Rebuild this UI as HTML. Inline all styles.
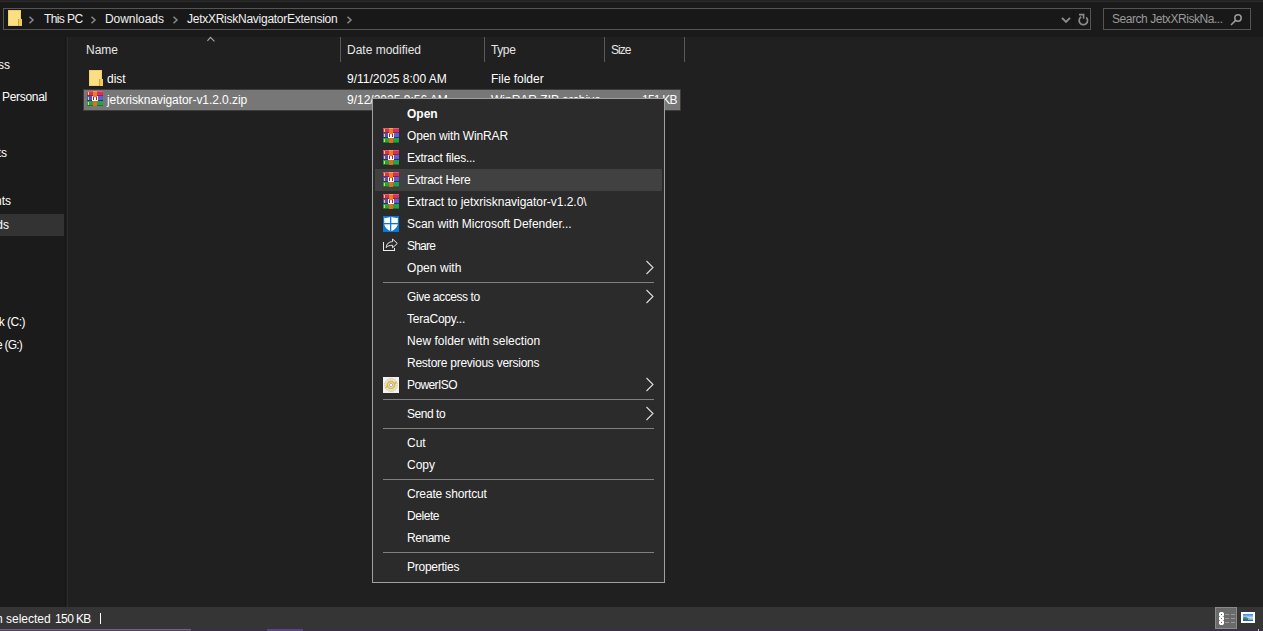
<!DOCTYPE html>
<html><head><meta charset="utf-8">
<style>
*{margin:0;padding:0;box-sizing:border-box}
html,body{width:1263px;height:631px;overflow:hidden;background:#202020;font-family:"Liberation Sans",sans-serif;font-size:12px;color:#fff}
.a{position:absolute}
.t{position:absolute;white-space:pre;line-height:14px;font-size:12px}
.hsep{position:absolute;width:1px;background:#5a5a5a;top:37px;height:25px}
.mi{position:absolute;left:407px;white-space:pre;line-height:14px}
.chev{position:absolute;left:645px}
.msep{position:absolute;left:383px;width:271px;height:1px;background:#808080}
</style></head><body>
<!-- top window strip -->
<div class="a" style="left:0;top:0;width:1263px;height:1px;background:#232323"></div>
<div class="a" style="left:0;top:1px;width:1263px;height:1px;background:#2b2b2b"></div>
<div class="a" style="left:0;top:2px;width:1263px;height:35px;background:#1a1a1a"></div>

<!-- address box -->
<div class="a" style="left:3px;top:8px;width:1088px;height:22px;border:1px solid #555;background:#181818"></div>
<div class="a" style="left:1073px;top:9px;width:1px;height:20px;background:#131313"></div>
<svg class="a" style="left:8px;top:10px" width="14" height="16" viewBox="0 0 14 16" shape-rendering="crispEdges">
  <rect x="0" y="0" width="13" height="16" fill="#f3cf66"/>
  <rect x="1" y="1" width="11" height="14" fill="#fbdf87"/>
  <rect x="10" y="9" width="4" height="7" fill="#f2c95a"/>
  <rect x="10" y="9" width="1" height="7" fill="#cfa43a"/>
</svg>
<svg class="a" style="left:28px;top:16px" width="7" height="8" viewBox="0 0 7 8"><path d="M1.5 0.8 L5 4 L1.5 7.2" fill="none" stroke="#8a8a8a" stroke-width="1.5"/></svg>
<div class="t" style="left:44px;top:12px;color:#f0f0f0;letter-spacing:-0.6px">This</div><div class="t" style="left:67px;top:12px;color:#f0f0f0;letter-spacing:-0.5px">PC</div>
<svg class="a" style="left:90px;top:16px" width="7" height="8" viewBox="0 0 7 8"><path d="M1.5 0.8 L5 4 L1.5 7.2" fill="none" stroke="#8a8a8a" stroke-width="1.5"/></svg>
<div class="t" style="left:105px;top:12px;color:#f0f0f0;letter-spacing:-0.05px">Downloads</div>
<svg class="a" style="left:172px;top:16px" width="7" height="8" viewBox="0 0 7 8"><path d="M1.5 0.8 L5 4 L1.5 7.2" fill="none" stroke="#8a8a8a" stroke-width="1.5"/></svg>
<div class="t" style="left:187px;top:12px;color:#f0f0f0;letter-spacing:-0.26px">JetxXRiskNavigatorExtension</div>
<svg class="a" style="left:346px;top:16px" width="7" height="8" viewBox="0 0 7 8"><path d="M1.5 0.8 L5 4 L1.5 7.2" fill="none" stroke="#8a8a8a" stroke-width="1.5"/></svg>
<svg class="a" style="left:1060px;top:16px" width="12" height="8" viewBox="1060 16 12 8"><path d="M1062 17.8 L1066 21.8 L1070 17.8" fill="none" stroke="#8c8c8c" stroke-width="1.9"/></svg>
<svg class="a" style="left:1076px;top:12px" width="14" height="15" viewBox="1076 12 14 15"><path d="M1086.2 17.3 A4.2 4.2 0 1 1 1081.2 16.8" fill="none" stroke="#8c8c8c" stroke-width="1.7"/><path d="M1079 14.6 H1083.6 V18.8" fill="none" stroke="#8c8c8c" stroke-width="1.6"/></svg>
<!-- search box -->
<div class="a" style="left:1103px;top:8px;width:148px;height:22px;border:1px solid #555;background:#181818"></div>
<div class="t" style="left:1112px;top:12px;color:#9a9a9a;letter-spacing:-0.45px">Search JetxXRiskNa...</div>
<svg class="a" style="left:1228px;top:12px" width="16" height="16" viewBox="1228 12 16 16"><circle cx="1238" cy="18" r="3.2" fill="none" stroke="#999" stroke-width="1.5"/><path d="M1235.6 20.4 L1231 25" stroke="#999" stroke-width="1.6"/></svg>

<!-- nav pane -->
<div class="a" style="left:0;top:37px;width:65px;height:570px;background:#1b1b1b"></div>
<div class="a" style="left:65px;top:37px;width:1px;height:570px;background:#161616"></div>
<div class="a" style="left:66px;top:37px;width:1px;height:570px;background:#1f1f1f"></div>
<div class="a" style="left:67px;top:37px;width:1px;height:570px;background:#2b2b2b"></div>
<div class="a" style="left:0;top:214px;width:64px;height:22px;background:#333"></div>
<div class="t" style="right:1253px;top:58px">Quick access</div>
<div class="t" style="left:2px;top:90px;letter-spacing:-0.3px">Personal</div>
<div class="t" style="right:1256px;top:146px">Documents</div>
<div class="t" style="right:1252px;top:194px">Documents</div>
<div class="t" style="right:1254px;top:218px">Downloads</div>
<div class="t" style="right:1238px;top:315px;letter-spacing:-0.5px">Local Disk (C:)</div>
<div class="t" style="right:1241px;top:338px;letter-spacing:-0.8px">Google Drive (G:)</div>

<!-- column header -->
<div class="t" style="left:86px;top:43px;color:#e6e6e6">Name</div>
<svg class="a" style="left:206px;top:36px" width="10" height="7" viewBox="0 0 10 7"><path d="M1.4 4.9 L4.5 1.4 L8.4 5.4" fill="none" stroke="#a8a8a8" stroke-width="1.1"/></svg>
<div class="hsep" style="left:340px"></div>
<div class="t" style="left:347px;top:43px;color:#e6e6e6">Date modified</div>
<div class="hsep" style="left:484px"></div>
<div class="t" style="left:491px;top:43px;color:#e6e6e6;letter-spacing:-0.4px">Type</div>
<div class="hsep" style="left:604px"></div>
<div class="t" style="left:611px;top:43px;color:#e6e6e6;letter-spacing:-1px">Size</div>
<div class="hsep" style="left:684px"></div>

<!-- row 1 -->
<svg class="a" style="left:89px;top:70px" width="14" height="16" viewBox="0 0 14 16" shape-rendering="crispEdges">
  <rect x="0" y="0" width="13" height="16" fill="#f3cf66"/>
  <rect x="1" y="1" width="11" height="14" fill="#fbdf87"/>
  <rect x="10" y="9" width="4" height="7" fill="#f2c95a"/>
  <rect x="10" y="9" width="1" height="7" fill="#cfa43a"/>
</svg>
<div class="t" style="left:107px;top:72px">dist</div>
<div class="t" style="left:347px;top:72px">9/11/2025 8:00 AM</div>
<div class="t" style="left:491px;top:72px">File folder</div>

<!-- row 2 selected -->
<div class="a" style="left:83px;top:89px;width:598px;height:22px;background:#777;border:1px solid #3d3d3d"></div>
<svg class="a" style="left:87px;top:91px" width="16" height="15" viewBox="0 0 16 15" shape-rendering="crispEdges">
  <rect x="0" y="0" width="16" height="5" fill="#d3305e"/>
  <rect x="0" y="0" width="16" height="1" fill="#e6587f"/>
  <rect x="0" y="4" width="16" height="1" fill="#9a1f45"/>
  <rect x="0" y="5" width="16" height="5" fill="#4a52c8"/>
  <rect x="11" y="5" width="5" height="4" fill="#5860d4"/>
  <rect x="0" y="9" width="16" height="1" fill="#2b2d8c"/>
  <rect x="0" y="10" width="16" height="5" fill="#22a444"/>
  <rect x="0" y="14" width="16" height="1" fill="#157a2e"/>
  <rect x="6" y="0" width="4" height="15" fill="#f07a22"/>
  <rect x="6" y="0" width="4" height="1" fill="#f6a050"/>
  <rect x="6" y="10" width="4" height="5" fill="#e8681e"/>
  <rect x="5" y="5" width="6" height="5" fill="#fbfbfb"/>
  <rect x="6" y="5" width="4" height="1" fill="#f07a22"/>
  <rect x="6" y="6" width="1" height="3" fill="#d41010"/>
  <rect x="9" y="6" width="1" height="3" fill="#d41010"/>
  <rect x="7" y="6" width="2" height="1" fill="#d8ecff"/>
  <rect x="1" y="1" width="1" height="3" fill="#f8d820"/>
  <rect x="1" y="6" width="1" height="3" fill="#f8d820"/>
  <rect x="1" y="11" width="1" height="3" fill="#f8d820"/>
</svg>
<div class="t" style="left:107px;top:93px;letter-spacing:-0.07px">jetxrisknavigator-v1.2.0.zip</div>
<div class="t" style="left:347px;top:93px">9/12/2025 9:56 AM</div>
<div class="t" style="left:491px;top:93px">WinRAR ZIP archive</div>
<div class="t" style="left:642px;top:93px;letter-spacing:-0.75px">151 KB</div>

<!-- status bar -->
<div class="a" style="left:0;top:607px;width:1263px;height:22px;background:#353535"></div>
<div class="t" style="left:-20px;top:612px">item selected</div>
<div class="t" style="left:55px;top:612px;letter-spacing:-0.6px">150</div><div class="t" style="left:76px;top:612px;letter-spacing:-0.8px">KB</div>
<div class="a" style="left:100px;top:613px;width:1px;height:11px;background:#fff"></div>
<!-- view buttons -->
<div class="a" style="left:1215px;top:607px;width:22px;height:22px;background:#6a6a6a;border:1px solid #8a8a8a"></div>
<div class="a" style="left:1219px;top:612px;width:5px;height:13px;background:#fff"></div>
<div class="a" style="left:1219px;top:612px;width:1px;height:1px;background:#9a9a9a"></div><div class="a" style="left:1219px;top:616px;width:1px;height:1px;background:#9a9a9a"></div><div class="a" style="left:1219px;top:620px;width:1px;height:1px;background:#9a9a9a"></div><div class="a" style="left:1219px;top:624px;width:1px;height:1px;background:#9a9a9a"></div><div class="a" style="left:1223px;top:612px;width:1px;height:1px;background:#9a9a9a"></div><div class="a" style="left:1223px;top:616px;width:1px;height:1px;background:#9a9a9a"></div><div class="a" style="left:1223px;top:620px;width:1px;height:1px;background:#9a9a9a"></div><div class="a" style="left:1223px;top:624px;width:1px;height:1px;background:#9a9a9a"></div>
<div class="a" style="left:1221px;top:614px;width:1px;height:1px;background:#3a7a4a"></div>
<div class="a" style="left:1221px;top:618px;width:1px;height:1px;background:#4a8af0"></div>
<div class="a" style="left:1221px;top:622px;width:1px;height:1px;background:#d02020"></div>
<div class="a" style="left:1225px;top:614px;width:4px;height:1px;background:#999"></div>
<div class="a" style="left:1231px;top:614px;width:4px;height:1px;background:#999"></div>
<div class="a" style="left:1225px;top:618px;width:4px;height:1px;background:#999"></div>
<div class="a" style="left:1231px;top:618px;width:4px;height:1px;background:#999"></div>
<div class="a" style="left:1225px;top:622px;width:4px;height:1px;background:#999"></div>
<div class="a" style="left:1231px;top:622px;width:4px;height:1px;background:#999"></div>
<div class="a" style="left:1241px;top:612px;width:14px;height:11px;background:#fff"></div>
<svg class="a" style="left:1243px;top:614px" width="10" height="7" viewBox="0 0 10 7">
  <defs><linearGradient id="sky" x1="0" y1="0" x2="0" y2="1"><stop offset="0" stop-color="#2f86ee"/><stop offset="0.6" stop-color="#d8e8f4"/></linearGradient></defs>
  <rect width="10" height="7" fill="url(#sky)"/>
  <path d="M0 3.2 Q3 2.4 5 4 Q7.5 5 10 4.6 V7 H0 Z" fill="#4a8a5a"/>
  <path d="M0 5.2 H10 V7 H0 Z" fill="#2f64a8"/>
  <rect x="5" y="4.6" width="5" height="1" fill="#c8dcea"/>
</svg>

<!-- taskbar strip -->
<div class="a" style="left:0;top:629px;width:1263px;height:2px;background:#3a2f4a"></div>
<div class="a" style="left:0;top:629px;width:191px;height:1px;background:#6f6580"></div>
<div class="a" style="left:0;top:630px;width:191px;height:1px;background:#4f4265"></div>
<div class="a" style="left:267px;top:629px;width:36px;height:2px;background:#5a4582"></div>

<div class="a" style="left:1258px;top:629px;width:1px;height:2px;background:#c8c8c8"></div>

<!-- context menu -->
<div class="a" style="left:372px;top:98px;width:293px;height:485px;background:#2b2b2b;border:1px solid #a0a0a0"></div>
<div class="a" style="left:375px;top:169px;width:287px;height:22px;background:#414141"></div>

<div class="mi" style="top:107px;font-weight:bold">Open</div>
<div class="mi" style="top:129px;letter-spacing:-0.153px">Open with WinRAR</div>
<div class="mi" style="top:151px;letter-spacing:-0.240px">Extract files...</div>
<div class="mi" style="top:173px;letter-spacing:-0.282px">Extract Here</div>
<div class="mi" style="top:195px;letter-spacing:-0.031px">Extract to jetxrisknavigator-v1.2.0\</div>
<div class="mi" style="top:217px;letter-spacing:-0.050px">Scan with Microsoft Defender...</div>
<div class="mi" style="top:239px;letter-spacing:-0.800px">Share</div>
<div class="mi" style="top:261px;letter-spacing:0.050px">Open with</div>
<div class="msep" style="top:282px"></div>
<div class="mi" style="top:290px;letter-spacing:-0.431px">Give access to</div>
<div class="mi" style="top:312px;letter-spacing:-0.220px">TeraCopy...</div>
<div class="mi" style="top:334px;letter-spacing:0.021px">New folder with selection</div>
<div class="mi" style="top:356px;letter-spacing:-0.258px">Restore previous versions</div>
<div class="mi" style="top:378px;letter-spacing:-0.600px">PowerISO</div>
<div class="msep" style="top:399px"></div>
<div class="mi" style="top:407px;letter-spacing:-0.450px">Send to</div>
<div class="msep" style="top:428px"></div>
<div class="mi" style="top:436px">Cut</div>
<div class="mi" style="top:458px">Copy</div>
<div class="msep" style="top:479px"></div>
<div class="mi" style="top:487px;letter-spacing:-0.150px">Create shortcut</div>
<div class="mi" style="top:509px;letter-spacing:-0.440px">Delete</div>
<div class="mi" style="top:531px;letter-spacing:-0.460px">Rename</div>
<div class="msep" style="top:552px"></div>
<div class="mi" style="top:560px;letter-spacing:-0.256px">Properties</div>

<!-- chevrons -->
<svg class="chev a" style="top:260px" width="10" height="15" viewBox="0 0 10 15"><path d="M1.5 1 L8 7.5 L1.5 14" fill="none" stroke="#ddd" stroke-width="1.1"/></svg>
<svg class="chev a" style="top:289px" width="10" height="15" viewBox="0 0 10 15"><path d="M1.5 1 L8 7.5 L1.5 14" fill="none" stroke="#ddd" stroke-width="1.1"/></svg>
<svg class="chev a" style="top:377px" width="10" height="15" viewBox="0 0 10 15"><path d="M1.5 1 L8 7.5 L1.5 14" fill="none" stroke="#ddd" stroke-width="1.1"/></svg>
<svg class="chev a" style="top:406px" width="10" height="15" viewBox="0 0 10 15"><path d="M1.5 1 L8 7.5 L1.5 14" fill="none" stroke="#ddd" stroke-width="1.1"/></svg>

<!-- menu icons -->
<svg class="a" style="left:383px;top:128px" width="16" height="15" viewBox="0 0 16 15" shape-rendering="crispEdges">
  <rect x="0" y="0" width="16" height="5" fill="#d3305e"/>
  <rect x="0" y="0" width="16" height="1" fill="#e6587f"/>
  <rect x="0" y="4" width="16" height="1" fill="#9a1f45"/>
  <rect x="0" y="5" width="16" height="5" fill="#4a52c8"/>
  <rect x="11" y="5" width="5" height="4" fill="#5860d4"/>
  <rect x="0" y="9" width="16" height="1" fill="#2b2d8c"/>
  <rect x="0" y="10" width="16" height="5" fill="#22a444"/>
  <rect x="0" y="14" width="16" height="1" fill="#157a2e"/>
  <rect x="6" y="0" width="4" height="15" fill="#f07a22"/>
  <rect x="6" y="0" width="4" height="1" fill="#f6a050"/>
  <rect x="6" y="10" width="4" height="5" fill="#e8681e"/>
  <rect x="5" y="5" width="6" height="5" fill="#fbfbfb"/>
  <rect x="6" y="5" width="4" height="1" fill="#f07a22"/>
  <rect x="6" y="6" width="1" height="3" fill="#d41010"/>
  <rect x="9" y="6" width="1" height="3" fill="#d41010"/>
  <rect x="7" y="6" width="2" height="1" fill="#d8ecff"/>
  <rect x="1" y="1" width="1" height="3" fill="#f8d820"/>
  <rect x="1" y="6" width="1" height="3" fill="#f8d820"/>
  <rect x="1" y="11" width="1" height="3" fill="#f8d820"/>
</svg>
<svg class="a" style="left:383px;top:150px" width="16" height="15" viewBox="0 0 16 15" shape-rendering="crispEdges">
  <rect x="0" y="0" width="16" height="5" fill="#d3305e"/>
  <rect x="0" y="0" width="16" height="1" fill="#e6587f"/>
  <rect x="0" y="4" width="16" height="1" fill="#9a1f45"/>
  <rect x="0" y="5" width="16" height="5" fill="#4a52c8"/>
  <rect x="11" y="5" width="5" height="4" fill="#5860d4"/>
  <rect x="0" y="9" width="16" height="1" fill="#2b2d8c"/>
  <rect x="0" y="10" width="16" height="5" fill="#22a444"/>
  <rect x="0" y="14" width="16" height="1" fill="#157a2e"/>
  <rect x="6" y="0" width="4" height="15" fill="#f07a22"/>
  <rect x="6" y="0" width="4" height="1" fill="#f6a050"/>
  <rect x="6" y="10" width="4" height="5" fill="#e8681e"/>
  <rect x="5" y="5" width="6" height="5" fill="#fbfbfb"/>
  <rect x="6" y="5" width="4" height="1" fill="#f07a22"/>
  <rect x="6" y="6" width="1" height="3" fill="#d41010"/>
  <rect x="9" y="6" width="1" height="3" fill="#d41010"/>
  <rect x="7" y="6" width="2" height="1" fill="#d8ecff"/>
  <rect x="1" y="1" width="1" height="3" fill="#f8d820"/>
  <rect x="1" y="6" width="1" height="3" fill="#f8d820"/>
  <rect x="1" y="11" width="1" height="3" fill="#f8d820"/>
</svg>
<svg class="a" style="left:383px;top:172px" width="16" height="15" viewBox="0 0 16 15" shape-rendering="crispEdges">
  <rect x="0" y="0" width="16" height="5" fill="#d3305e"/>
  <rect x="0" y="0" width="16" height="1" fill="#e6587f"/>
  <rect x="0" y="4" width="16" height="1" fill="#9a1f45"/>
  <rect x="0" y="5" width="16" height="5" fill="#4a52c8"/>
  <rect x="11" y="5" width="5" height="4" fill="#5860d4"/>
  <rect x="0" y="9" width="16" height="1" fill="#2b2d8c"/>
  <rect x="0" y="10" width="16" height="5" fill="#22a444"/>
  <rect x="0" y="14" width="16" height="1" fill="#157a2e"/>
  <rect x="6" y="0" width="4" height="15" fill="#f07a22"/>
  <rect x="6" y="0" width="4" height="1" fill="#f6a050"/>
  <rect x="6" y="10" width="4" height="5" fill="#e8681e"/>
  <rect x="5" y="5" width="6" height="5" fill="#fbfbfb"/>
  <rect x="6" y="5" width="4" height="1" fill="#f07a22"/>
  <rect x="6" y="6" width="1" height="3" fill="#d41010"/>
  <rect x="9" y="6" width="1" height="3" fill="#d41010"/>
  <rect x="7" y="6" width="2" height="1" fill="#d8ecff"/>
  <rect x="1" y="1" width="1" height="3" fill="#f8d820"/>
  <rect x="1" y="6" width="1" height="3" fill="#f8d820"/>
  <rect x="1" y="11" width="1" height="3" fill="#f8d820"/>
</svg>
<svg class="a" style="left:383px;top:194px" width="16" height="15" viewBox="0 0 16 15" shape-rendering="crispEdges">
  <rect x="0" y="0" width="16" height="5" fill="#d3305e"/>
  <rect x="0" y="0" width="16" height="1" fill="#e6587f"/>
  <rect x="0" y="4" width="16" height="1" fill="#9a1f45"/>
  <rect x="0" y="5" width="16" height="5" fill="#4a52c8"/>
  <rect x="11" y="5" width="5" height="4" fill="#5860d4"/>
  <rect x="0" y="9" width="16" height="1" fill="#2b2d8c"/>
  <rect x="0" y="10" width="16" height="5" fill="#22a444"/>
  <rect x="0" y="14" width="16" height="1" fill="#157a2e"/>
  <rect x="6" y="0" width="4" height="15" fill="#f07a22"/>
  <rect x="6" y="0" width="4" height="1" fill="#f6a050"/>
  <rect x="6" y="10" width="4" height="5" fill="#e8681e"/>
  <rect x="5" y="5" width="6" height="5" fill="#fbfbfb"/>
  <rect x="6" y="5" width="4" height="1" fill="#f07a22"/>
  <rect x="6" y="6" width="1" height="3" fill="#d41010"/>
  <rect x="9" y="6" width="1" height="3" fill="#d41010"/>
  <rect x="7" y="6" width="2" height="1" fill="#d8ecff"/>
  <rect x="1" y="1" width="1" height="3" fill="#f8d820"/>
  <rect x="1" y="6" width="1" height="3" fill="#f8d820"/>
  <rect x="1" y="11" width="1" height="3" fill="#f8d820"/>
</svg>
<svg class="a" style="left:383px;top:216px" width="16" height="16" viewBox="0 0 16 16">
  <rect width="16" height="16" fill="#0a78d7"/>
  <path d="M8 0.8 Q11 2.2 14.8 1.8 L14.8 8 Q14.2 12.8 8 15.3 Q1.8 12.8 1.2 8 L1.2 1.8 Q5 2.2 8 0.8 Z" fill="#fff"/>
  <rect x="7" y="0.5" width="1.3" height="15" fill="#0a78d7"/>
  <rect x="1" y="7" width="14" height="1.3" fill="#0a78d7"/>
</svg>
<svg class="a" style="left:383px;top:238px" width="16" height="15" viewBox="0 0 16 15">
  <path d="M0.5 4 V12.5 H11.5 V10" fill="none" stroke="#ececec" stroke-width="1.05"/>
  <path d="M3.2 9.6 C3.6 5.6 6 3.7 9.6 3.7 V1 L14.3 5.4 L9.6 9.8 V7.3 C6.6 7.3 4.6 8 3.2 9.6 Z" fill="none" stroke="#ececec" stroke-width="1" stroke-linejoin="miter"/>
</svg>
<svg class="a" style="left:383px;top:377px" width="16" height="16" viewBox="0 0 16 16">
  <rect width="16" height="16" fill="#f2f2f2"/>
  <circle cx="8" cy="8" r="6.4" fill="#e2e2e6" stroke="#d2b440" stroke-width="0.7" stroke-dasharray="1.4 0.9"/>
  <circle cx="8" cy="8" r="3.6" fill="none" stroke="#e6bd10" stroke-width="1.5"/>
  <path d="M2.4 11.2 Q3.6 9.6 4.6 8.6 M13.4 4.6 Q12.4 6.2 11.4 7.2" stroke="#e0b410" stroke-width="1.2" fill="none"/>
  <circle cx="8" cy="8" r="1.7" fill="#fff" stroke="#a8a8a8" stroke-width="0.9"/>
</svg>
</body></html>
